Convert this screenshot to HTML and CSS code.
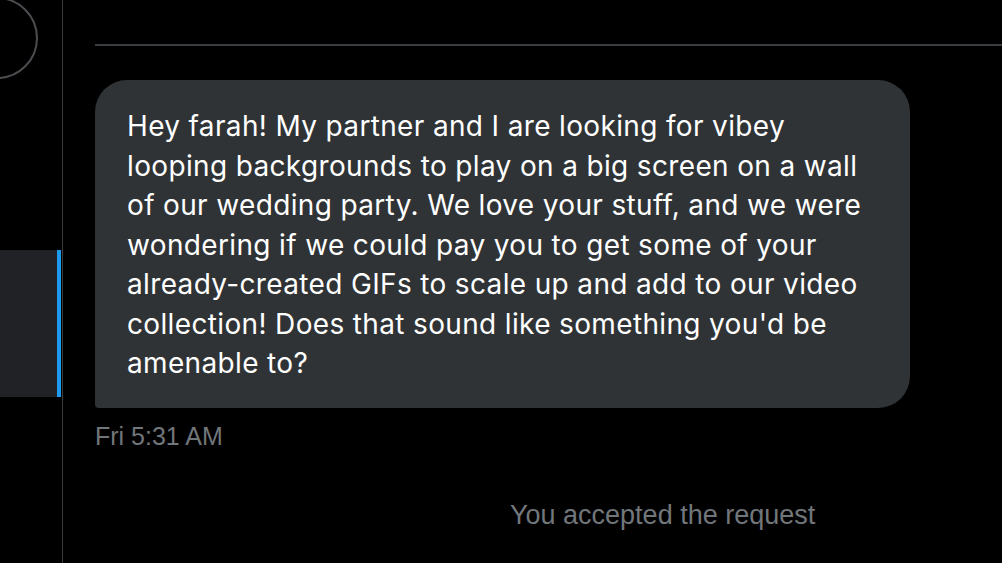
FILE: index.html
```html
<!DOCTYPE html>
<html lang="en">
<head>
    <meta charset="UTF-8">
    <meta name="viewport" content="width=device-width, initial-scale=1.0">
    <title>Messages</title>
    <link rel="stylesheet" href="styles.css">
</head>
<body>

    <!-- Lista de conversas (cortada) -->
    <div class="sidebar">
        <div class="avatar"></div>
        <div class="conversation active"></div>
    </div>

    <!-- Conversa -->
    <div class="chat">
        <div class="chat-divider"></div>

        <div class="bubble">
            Hey farah! My partner and I are looking for vibey<br>
            looping backgrounds to play on a big screen on a wall<br>
            of our wedding party. We love your stuff, and we were<br>
            wondering if we could pay you to get some of your<br>
            already-created GIFs to scale up and add to our video<br>
            collection! Does that sound like something you'd be<br>
            amenable to?
        </div>
        <div class="timestamp">Fri 5:31 AM</div>

        <div class="notice">You accepted the request</div>
    </div>

</body>
</html>
```

FILE: styles.css
```css
body {
    margin: 0;
    padding: 0;
    height: 100vh;
    background-color: #000;
    color: #e7e9ea;
    font-family: "Liberation Sans", Arial, sans-serif;
    overflow: hidden;
    display: flex;
}

/* Coluna da esquerda */
.sidebar {
    width: 62px;
    flex-shrink: 0;
    border-right: 1px solid #3a3d40;
    position: relative;
}

.avatar {
    position: absolute;
    top: -3px;
    left: -44px;
    width: 78px;
    height: 78px;
    border: 2px solid #4b4d50;
    border-radius: 50%;
}

.conversation {
    margin-top: 250px;
    height: 147px;
    background-color: #202226;
}

.conversation.active {
    border-right: 4px solid #1d9bf0;
    margin-right: 1px;
}

/* Area da conversa */
.chat {
    flex: 1;
    padding-left: 32px;
}

.chat-divider {
    margin-top: 44px;
    height: 2px;
    background-color: #3a3d41;
}

.bubble {
    margin-top: 34px;
    width: 751px;
    padding: 27px 32px 24px 32px;
    background-color: #2f3336;
    border-radius: 32px 32px 32px 4px;
    color: #fff;
    font-family: Inter, "Open Sans", sans-serif;
    font-size: 28px;
    line-height: 39.5px;
    letter-spacing: 0.35px;
}

.timestamp {
    margin-top: 14px;
    font-size: 25px;
    color: #71767b;
}

.notice {
    margin-top: 49px;
    padding-left: 415px;
    font-size: 27px;
    color: #71767b;
}
```
